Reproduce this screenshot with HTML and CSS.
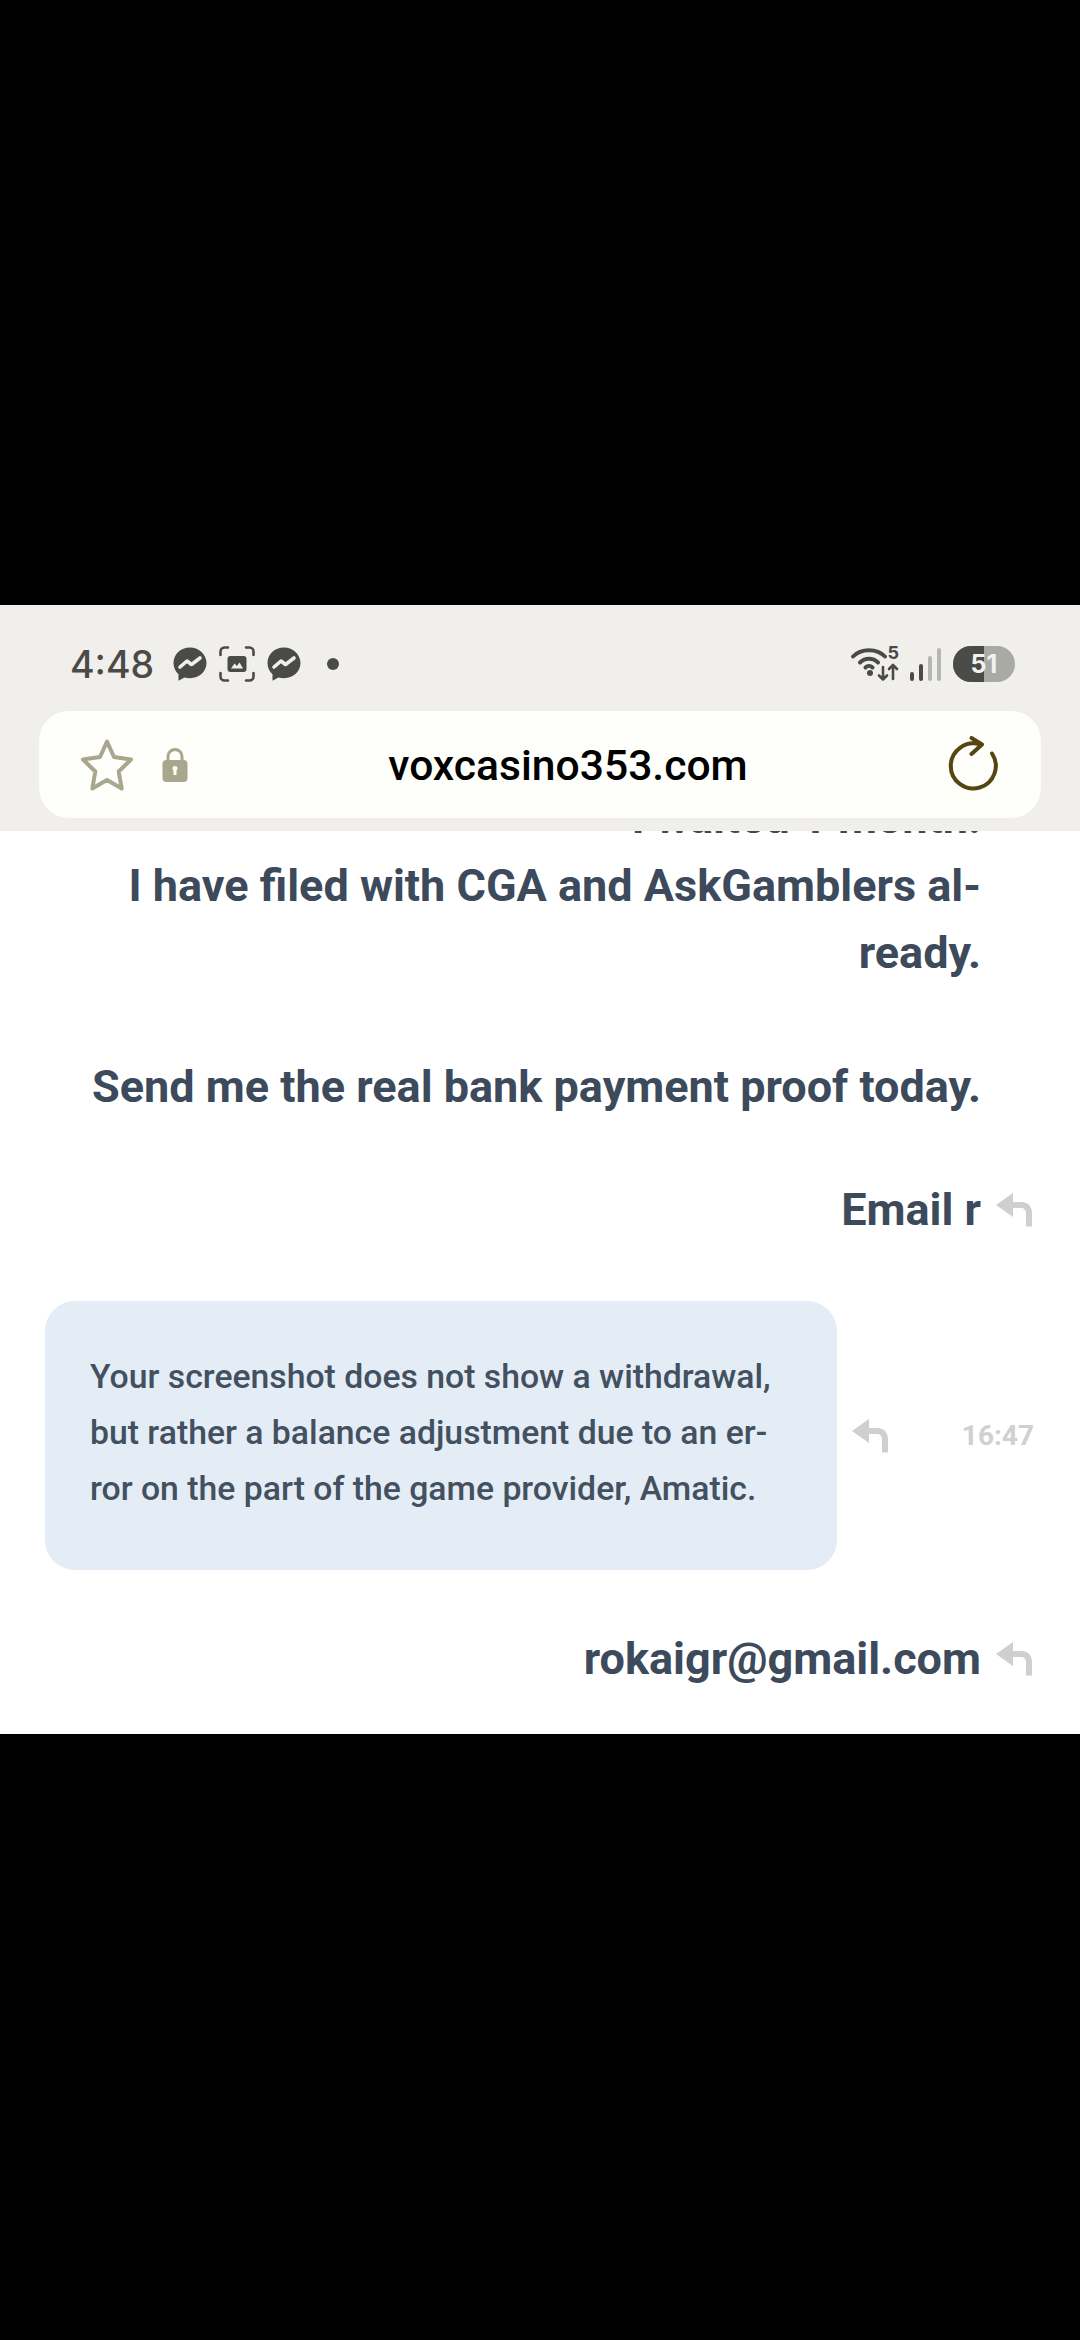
FILE: index.html
```html
<!DOCTYPE html>
<html lang="en">
<head>
<meta charset="utf-8">
<title>voxcasino353.com</title>
<link rel="stylesheet" href="styles.css">
</head>
<body>
<div class="letterbox-top"></div>
<div class="screen">
  <header class="chrome">
    <div class="status">
      <div class="status-left">
        <span class="clock">4:48</span>
        <svg class="si" width="36" height="36" viewBox="0 0 36 36"><path fill="#4a4a48" d="M18 1.500C8.600 1.500 1.500 8.300 1.500 17.100c0 4.600 1.900 8.500 5 11.200v6.400l5.900-3.200c1.700.5 3.600.7 5.600.7 9.400 0 16.500-6.800 16.500-15.100S27.400 1.500 18 1.500z"/><path fill="none" stroke="#f0efec" stroke-width="3.600" stroke-linecap="round" stroke-linejoin="round" d="M8 21l7-6 4.500 3.500 8.500-6.500"/></svg>
        <svg class="si" width="36" height="36" viewBox="0 0 36 36"><path fill="none" stroke="#4a4a48" stroke-width="2.600" stroke-linecap="round" d="M9 1.500H5.500a4 4 0 0 0-4 4V9M27 1.500h3.500a4 4 0 0 1 4 4V9M9 34.500H5.500a4 4 0 0 1-4-4V27M27 34.500h3.500a4 4 0 0 0 4-4V27"/><rect x="8.500" y="10" width="19" height="16" rx="3" fill="#4a4a48"/><path fill="#f0efec" d="M12 22.500l3.500-5 2.500 2.500 2.500-3.500 3.500 6z"/></svg>
        <svg class="si" width="36" height="36" viewBox="0 0 36 36"><path fill="#4a4a48" d="M18 1.500C8.600 1.500 1.500 8.300 1.500 17.100c0 4.600 1.900 8.500 5 11.200v6.400l5.900-3.200c1.700.5 3.600.7 5.600.7 9.400 0 16.500-6.800 16.500-15.100S27.400 1.500 18 1.500z"/><path fill="none" stroke="#f0efec" stroke-width="3.600" stroke-linecap="round" stroke-linejoin="round" d="M8 21l7-6 4.500 3.500 8.500-6.500"/></svg>
        <span class="dot"></span>
      </div>
      <div class="status-right">
        <svg class="wifi" width="50" height="36" viewBox="0 0 50 36"><g fill="none" stroke="#4a4a48" stroke-width="4" stroke-linecap="round"><path d="M4 10.500C12 2 28 2 36 10.500"/><path d="M11 16.500C16 11.500 24 11.500 29 16.500"/><path d="M16.500 21.500C18.500 19.500 21.500 19.500 23.500 21.500"/></g><circle cx="21" cy="27" r="3" fill="#4a4a48"/><g fill="none" stroke="#4a4a48" stroke-width="2.600" stroke-linecap="round" stroke-linejoin="round"><path d="M34 21v12.500M30 29.500l4 4 4-4"/><path d="M44 33V19M40 23l4-4 4 4"/></g></svg>
        <span class="five">5</span>
        <div class="bars">
          <span class="bar b1"></span><span class="bar b2"></span><span class="bar b3"></span><span class="bar b4"></span>
        </div>
        <div class="battery"><span class="battery-fill"></span><span class="battery-num">51</span></div>
      </div>
    </div>
    <div class="urlbar">
      <svg class="star" width="56" height="54" viewBox="0 0 56 54"><path fill="none" stroke="#a8a68c" stroke-width="4" stroke-linejoin="round" d="M28 3.500l7 15.500 17 2.500-12.300 12 3 17-14.700-8.400-14.700 8.400 3-17L4 21.500l17-2.500z"/></svg>
      <svg class="lock" width="26" height="36" viewBox="0 0 26 36"><path fill="none" stroke="#a8a68c" stroke-width="3" d="M6 15V9.500a7 7 0 0 1 14 0V15"/><rect x="0.500" y="13" width="25" height="22" rx="4" fill="#a8a68c"/><path fill="#fefefb" d="M10.500 21.500a2.500 2.500 0 1 1 5 0c0 .9-.4 1.500-1 2V28h-3v-4.500c-.6-.5-1-1.100-1-2z"/></svg>
      <span class="url">voxcasino353.com</span>
      <svg class="reload" width="50" height="58" viewBox="0 0 50 58"><path fill="none" stroke="#54460f" stroke-width="4" stroke-linecap="round" stroke-linejoin="round" d="M44 17.500A22.500 22.500 0 1 1 32 8.500M23.500 2L34 8.500L23.500 18"/></svg>
    </div>
  </header>

  <main class="thread">
    <div class="clipped">I waited 1 month.</div>
    <p class="msg first">I have filed with CGA and AskGamblers al-<br>ready.</p>
    <p class="msg second">Send me the real bank payment proof today.</p>
    <div class="row-right email-r">
      <span class="sender">Email r</span>
      <svg class="reply" width="37" height="34" viewBox="0 0 37 34"><path fill="#cfcfcf" d="M17 0v9h8c7 0 11 4.500 11 11v13.500h-6V20.500c0-3.500-2-5.500-5-5.500h-8v9L0 12z"/></svg>
    </div>
    <div class="incoming">
      <div class="bubble">Your screenshot does not show a withdrawal, but rather a balance adjustment due to an er&shy;ror on the part of the game provider, Amatic.</div>
      <svg class="reply" width="37" height="34" viewBox="0 0 37 34"><path fill="#cfcfcf" d="M17 0v9h8c7 0 11 4.500 11 11v13.500h-6V20.500c0-3.500-2-5.500-5-5.500h-8v9L0 12z"/></svg>
      <span class="time">16:47</span>
    </div>
    <div class="row-right email-g">
      <span class="sender">rokaigr@gmail.com</span>
      <svg class="reply" width="37" height="34" viewBox="0 0 37 34"><path fill="#cfcfcf" d="M17 0v9h8c7 0 11 4.500 11 11v13.500h-6V20.500c0-3.500-2-5.500-5-5.500h-8v9L0 12z"/></svg>
    </div>
  </main>
</div>
<div class="letterbox-bottom"></div>
</body>
</html>
```
FILE: styles.css
```css
* { box-sizing: border-box; }
html, body { margin: 0; padding: 0; }
body {
  width: 1080px;
  height: 2340px;
  background: #000;
  display: flex;
  flex-direction: column;
  overflow: hidden;
  font-family: Roboto, "Liberation Sans", sans-serif;
}
.letterbox-top { height: 605px; flex: none; background: #000; }
.letterbox-bottom { flex: 1; background: #000; }
.screen { height: 1129px; flex: none; background: #fff; display: flex; flex-direction: column; overflow: hidden; }

.chrome {
  height: 226px;
  flex: none;
  background: #f0efec;
  padding: 0 39px;
}
.status {
  height: 106px;
  padding: 12px 26px 0 31px;
  display: flex;
  align-items: center;
  justify-content: space-between;
}
.status-left { display: flex; align-items: center; }
.clock {
  font-family: Inter, Roboto, sans-serif;
  font-size: 37.500px;
  font-weight: 500;
  color: #4a4a48;
  margin-right: 18px;
}
.si { margin-right: 11px; flex: none; }
.dot { width: 12px; height: 12px; border-radius: 50%; background: #4a4a48; margin-left: 14px; }
.status-right { display: flex; align-items: center; position: relative; }
.wifi { flex: none; margin-right: 11px; }
.five {
  position: absolute;
  left: 39px;
  top: -2px;
  font-family: Inter, sans-serif;
  font-size: 18px;
  line-height: 1;
  font-weight: 700;
  color: #4a4a48;
}
.bars { display: flex; align-items: flex-end; gap: 4.500px; height: 34px; margin-right: 12px; }
.bar { width: 4.500px; border-radius: 2.250px; background: #b5b5b2; }
.b1 { height: 9px; background: #4a4a48; }
.b2 { height: 17px; background: #4a4a48; }
.b3 { height: 25px; }
.b4 { height: 33px; }
.battery {
  width: 62px;
  height: 36px;
  border-radius: 18px;
  background: #a9a9a6;
  position: relative;
  overflow: hidden;
  display: flex;
  align-items: center;
  justify-content: center;
}
.battery-fill { position: absolute; left: 0; top: 0; bottom: 0; width: 31px; background: #4a4a48; }
.battery-num {
  position: relative;
  font-family: Inter, sans-serif;
  font-size: 25px;
  font-weight: 700;
  color: #f2f1ee;
}
.urlbar {
  height: 107px;
  background: #fefefb;
  border-radius: 30px;
  display: flex;
  align-items: center;
  padding: 0 43px 0 40px;
}
.star { flex: none; }
.lock { flex: none; margin-left: 27px; }
.url {
  flex: 1;
  text-align: center;
  font-family: Roboto, sans-serif;
  font-size: 42.600px;
  font-weight: 500;
  color: #000;
}
.reload { flex: none; }

.thread { flex: 1; position: relative; overflow: hidden; padding: 0 45px; }
.clipped {
  position: absolute;
  right: 99px;
  top: -47px;
  font-size: 45px;
  line-height: 67px;
  font-weight: 700;
  color: #3c4a5c;
  white-space: nowrap;
}
.msg {
  margin: 0;
  font-size: 45px;
  line-height: 67px;
  font-weight: 700;
  color: #3c4a5c;
  text-align: right;
  padding-right: 54px;
}
.first { margin-top: 21px; }
.second { margin-top: 67px; }
.row-right { display: flex; justify-content: flex-end; align-items: center; height: 67px; }
.sender { font-size: 45px; font-weight: 700; color: #3c4a5c; }
.row-right .reply { margin-left: 15px; margin-right: 2px; }
.email-r { margin-top: 56px; }
.incoming { display: flex; align-items: center; margin-top: 58px; }
.bubble {
  width: 792px;
  flex: none;
  background: #e4ecf6;
  border-radius: 30px;
  padding: 48px 45px 53px;
  font-size: 33.750px;
  line-height: 56px;
  font-weight: 500;
  color: #42505f;
}
.incoming .reply { margin-left: 15px; }
.time { margin-left: auto; font-size: 28px; font-weight: 700; color: #d0d0d0; margin-right: 1px; }
.email-g { margin-top: 55px; }
```
